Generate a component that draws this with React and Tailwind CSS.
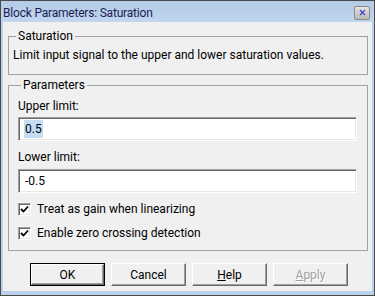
function Sunken({ children, className = "" }) {
  return (
    <div
      className={
        "bg-white border border-t-[#a0a0a0] border-l-[#a0a0a0] border-r-[#ffffff] border-b-[#ffffff] shadow-[inset_1px_1px_0_#696969,inset_-1px_-1px_0_#e8e8dc] " +
        className
      }
    >
      {children}
    </div>
  );
}

function Checkbox({ label }) {
  return (
    <div className="flex items-center h-[16px] pl-[9px]">
      <Sunken className="w-[13px] h-[13px] flex items-center justify-center">
        <svg width="9" height="9" viewBox="0 0 9 9">
          <path d="M1 4 L3.5 6.5 L8 1.5" stroke="#000" strokeWidth="1.8" fill="none" />
        </svg>
      </Sunken>
      <span className="ml-[6px]">{label}</span>
    </div>
  );
}

function Button({ children, isDefault, disabled }) {
  const inner = (
    <div
      className={
        "h-full w-full flex items-center justify-center bg-[#f0f0f0] border border-t-[#ffffff] border-l-[#ffffff] border-r-[#696969] border-b-[#696969] shadow-[inset_-1px_-1px_0_#a0a0a0] " +
        (disabled ? "text-[#a0a0a0] [text-shadow:1px_1px_0_#ffffff]" : "text-black")
      }
    >
      {children}
    </div>
  );
  return (
    <div className={"w-[75px] h-[23px] " + (isDefault ? "border border-black" : "")}>
      {inner}
    </div>
  );
}

export default function App() {
  return (
    <div
      className="w-[375px] h-[296px] bg-[#b9d1ea] border border-[#4a4a4a] flex flex-col text-[12px] leading-[16px] text-black"
      style={{ fontFamily: "Roboto, 'Liberation Sans', sans-serif" }}
    >
      {/* Title bar */}
      <div className="h-[21px] flex items-center justify-between pl-[2px] pr-[4px] bg-gradient-to-b from-[#b4cbe6] to-[#c1d6ee]">
        <span className="text-[#1c1c54] tracking-[-0.2px] pt-[2px]">
          Block Parameters: Saturation
        </span>
        <div className="w-[16px] h-[14px] mt-[2px] rounded-[2px] border border-[#8a8a8a] bg-gradient-to-b from-[#e4e4e4] to-[#b9b9b9] flex items-center justify-center">
          <svg width="7" height="7" viewBox="0 0 7 7">
            <path d="M1 1 L6 6 M6 1 L1 6" stroke="#4a4ad0" strokeWidth="1.4" />
          </svg>
        </div>
      </div>

      {/* Content */}
      <div className="mx-[2px] mb-[4px] flex-1 bg-[#f0f0f0] flex flex-col pt-[6px] pl-[5px] pr-[4px]">
        <fieldset className="border border-[#a0a0a0] pb-[11px] px-[4px]">
          <legend className="ml-[3px] px-[2px] leading-[16px]">Saturation</legend>
          <div className="mt-[3px] leading-[16px]">
            Limit input signal to the upper and lower saturation values.
          </div>
        </fieldset>

        <fieldset className="mt-[2px] border border-[#a0a0a0] pl-[9px] pr-[10px] pb-[9px]">
          <legend className="ml-[3px] px-[2px] leading-[16px]">Parameters</legend>
          <div className="mt-[5px]">Upper limit:</div>
          <Sunken className="mt-[3px] h-[24px] flex items-center pl-[5px]">
            <span className="bg-[#c5dcf5] px-[1px] leading-[18px]">0.5</span>
          </Sunken>
          <div className="mt-[8px]">Lower limit:</div>
          <Sunken className="mt-[4px] h-[24px] flex items-center pl-[6px]">
            <span>-0.5</span>
          </Sunken>
          <div className="mt-[8px] -ml-[9px]">
            <Checkbox label="Treat as gain when linearizing" />
          </div>
          <div className="mt-[8px] -ml-[9px]">
            <Checkbox label="Enable zero crossing detection" />
          </div>
        </fieldset>

        <div className="mt-[12px] flex justify-end gap-[6px] pr-[20px]">
          <Button isDefault>OK</Button>
          <Button>Cancel</Button>
          <Button>
            <span>
              <span className="underline">H</span>elp
            </span>
          </Button>
          <Button disabled>
            <span>
              <span className="underline">A</span>pply
            </span>
          </Button>
        </div>
      </div>
    </div>
  );
}
